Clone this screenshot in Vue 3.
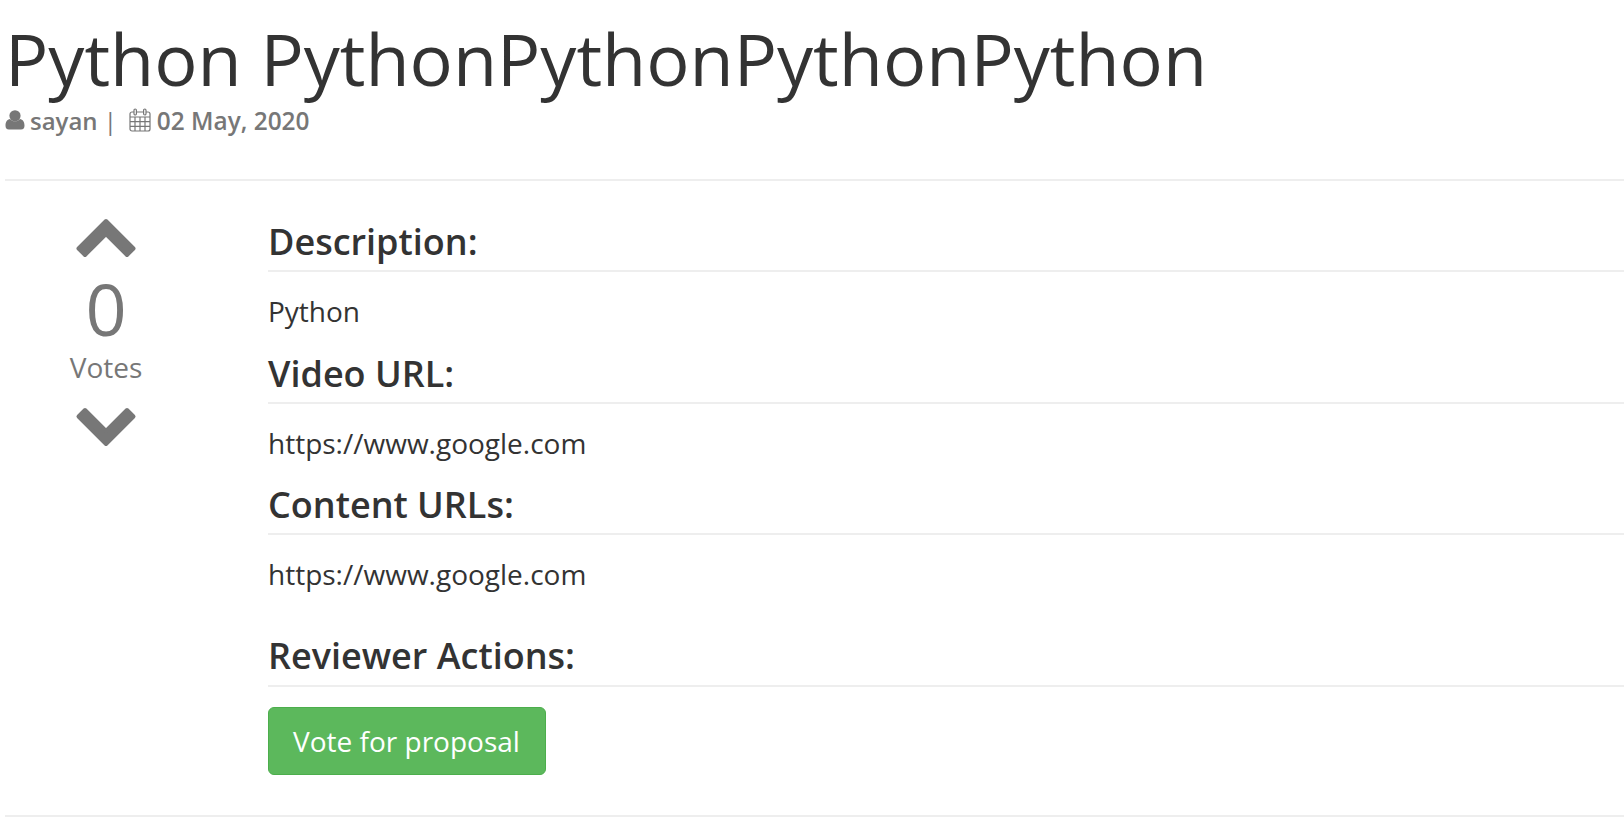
<script setup>
const sections = [
  { title: 'Description:', text: 'Python' },
  { title: 'Video URL:', text: 'https://www.google.com' },
  { title: 'Content URLs:', text: 'https://www.google.com' }
];
</script>

<template>
  <div class="page">
    <h1 class="title">Python PythonPythonPythonPython</h1>
    <div class="meta">
      <svg class="icon-user" viewBox="0 0 20 20" width="20" height="20">
        <circle cx="10" cy="5.800" r="5.600" fill="#777" />
        <path d="M.5 15.500C.5 12 2.200 9.400 5 9 6.500 10.500 8.200 11.300 10 11.300S13.500 10.500 15 9C17.800 9.400 19.500 12 19.500 15.500 19.500 18 18.500 19.500 16 19.500H4C1.500 19.500 .5 18 .5 15.500Z" fill="#777" />
      </svg>
      <span class="author">sayan</span>
      <span class="sep">|</span>
      <svg class="icon-cal" viewBox="0 0 22 24" width="22" height="24" fill="none" stroke="#777" stroke-width="1.200">
        <rect x="1" y="4" width="20" height="19" rx="2" />
        <path d="M1 9H21M1 13.600H21M1 18.300H21M6 9V23M11 9V23M16 9V23" />
        <rect x="5" y="1" width="2.400" height="6" rx="1.200" fill="#fff" />
        <rect x="14.600" y="1" width="2.400" height="6" rx="1.200" fill="#fff" />
      </svg>
      <span class="date">02 May, 2020</span>
    </div>
    <hr class="rule" />
    <div class="proposal">
      <div class="votes">
        <svg class="arrow up" viewBox="0 0 62 40" width="62" height="40">
          <path d="M31 3 58.500 30.500 52 37 31 16 10 37 3.500 30.500Z" fill="#777" stroke="#777" stroke-width="4" stroke-linejoin="round" />
        </svg>
        <div class="count">0</div>
        <div class="label">Votes</div>
        <svg class="arrow" viewBox="0 0 62 40" width="62" height="40">
          <path d="M31 37 58.500 9.500 52 3 31 24 10 3 3.500 9.500Z" fill="#777" stroke="#777" stroke-width="4" stroke-linejoin="round" />
        </svg>
      </div>
      <div class="details">
        <section v-for="item in sections" :key="item.title">
          <h3 class="heading">{{ item.title }}</h3>
          <p class="text">{{ item.text }}</p>
        </section>
        <h3 class="heading actions">Reviewer Actions:</h3>
        <button class="btn-vote">Vote for proposal</button>
      </div>
    </div>
    <hr class="rule bottom" />
  </div>
</template>

<style>
html, body {
  background: #fff;
  overflow: hidden;
}
</style>

<style scoped>
.page {
  height: 834px;
  padding-left: 5px;
  box-sizing: border-box;
  font-family: "Open Sans", sans-serif;
  color: #333;
  overflow: hidden;
}

.title {
  margin: 19px 0 0;
  font-size: 72px;
  font-weight: 400;
  line-height: 79px;
  white-space: nowrap;
}

.meta {
  display: flex;
  align-items: center;
  height: 26px;
  margin-top: 9px;
  font-size: 24px;
  font-weight: 600;
  color: #777;
  white-space: nowrap;
}

.icon-user {
  margin-right: 5px;
}

.sep {
  margin: 0 12px 0 6px;
  font-weight: 400;
}

.icon-cal {
  margin-right: 6px;
}

.date {
  font-size: 24.4px;
}

.rule {
  margin: 46px 0 0;
  border: 0;
  border-top: 2px solid #eee;
}

.proposal {
  display: flex;
}

.votes {
  flex: 0 0 263px;
  display: flex;
  flex-direction: column;
  align-items: flex-start;
  padding-top: 37px;
  color: #777;
}

.arrow {
  margin-left: 70px;
}

.arrow.up {
  margin-bottom: 14px;
}

.count {
  width: 202px;
  text-align: center;
  font-size: 72px;
  line-height: 72px;
}

.label {
  width: 202px;
  margin-top: 5px;
  margin-bottom: 22px;
  text-align: center;
  font-size: 28px;
  line-height: 36px;
}

.details {
  flex: 1;
  padding-top: 40px;
}

.heading {
  margin: 0;
  padding-bottom: 7px;
  border-bottom: 2px solid #eee;
  font-size: 36px;
  font-weight: 600;
  line-height: 42px;
}

.text {
  margin: 19px 0 21.5px;
  font-size: 28px;
  line-height: 40px;
  color: #333;
}

.actions {
  margin-top: 41px;
  padding-bottom: 8px;
}

.btn-vote {
  display: block;
  margin-top: 20px;
  padding: 0 25px 0 24px;
  height: 68px;
  background: #5cb85c;
  border: 1px solid #4cae4c;
  border-radius: 6px;
  color: #fff;
  font-family: inherit;
  font-size: 28px;
}

.bottom {
  margin-top: 40px;
}
</style>
